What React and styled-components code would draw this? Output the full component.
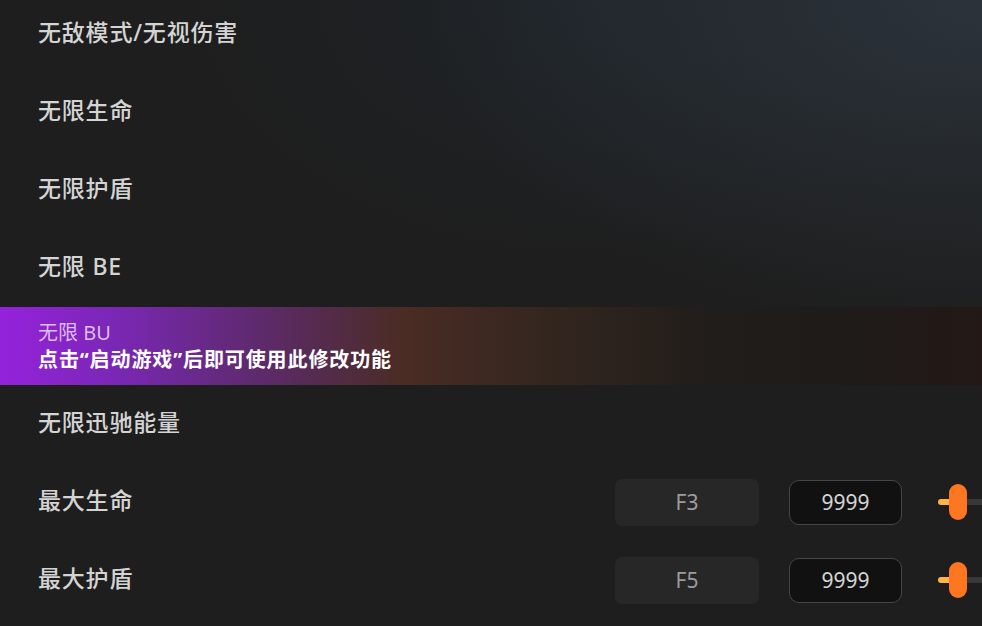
import React from "react";
import styled, { createGlobalStyle } from "styled-components";

const GlobalStyle = createGlobalStyle`
  html, body {
    margin: 0;
    padding: 0;
    background: #1e1e1e;
    overflow: hidden;
  }
  body {
    font-family: "Noto Sans", "Noto Sans CJK SC", sans-serif;
  }
`;

const Page = styled.div`
  width: 982px;
  height: 626px;
  overflow: hidden;
  background:
    radial-gradient(ellipse 560px 330px at 100% 0%, rgba(44, 52, 60, 0.95), rgba(44, 52, 60, 0) 100%),
    radial-gradient(ellipse 420px 260px at 62% 0%, rgba(30, 36, 42, 0.9), rgba(30, 36, 42, 0) 100%),
    #1e1e1e;
`;

const List = styled.div`
  display: flex;
  flex-direction: column;
  margin-top: -5px;
`;

const Row = styled.div`
  display: flex;
  align-items: center;
  height: 78px;
  padding-left: 38px;
  flex-shrink: 0;
  background: ${(p) =>
    p.$active
      ? "linear-gradient(90deg, #9522dc 0%, #7a27b4 12%, #5e2a6e 26%, #4a2c24 41%, #33261f 56%, #211d1a 72%, #1f1b19 86%, #231816 100%)"
      : "transparent"};
`;

const Label = styled.div`
  flex: 0 0 577px;
  font-size: 23px;
  font-weight: 500;
  color: #d4d4d4;
  letter-spacing: 0.8px;
  padding-bottom: 6px;
`;

const Stack = styled.div`
  display: flex;
  flex-direction: column;
`;

const SubLabel = styled.div`
  font-size: 20px;
  line-height: 27px;
  color: rgba(235, 220, 245, 0.85);
`;

const Hint = styled.div`
  font-size: 20px;
  line-height: 27px;
  font-weight: 700;
  color: #ffffff;
  letter-spacing: 0.9px;
`;

const Controls = styled.div`
  display: flex;
  align-items: center;
  flex-shrink: 0;
`;

const KeyBox = styled.div`
  width: 144px;
  height: 47px;
  border-radius: 7px;
  background: #272727;
  color: #9c9c9c;
  font-size: 21px;
  display: flex;
  align-items: center;
  justify-content: center;
`;

const ValueBox = styled.div`
  width: 111px;
  height: 43px;
  margin-left: 30px;
  border: 1px solid #464646;
  border-radius: 10px;
  background: #111111;
  color: #d4d4d4;
  font-size: 21px;
  display: flex;
  align-items: center;
  justify-content: center;
`;

const Slider = styled.div`
  margin-left: 36px;
  width: 240px;
  height: 36px;
  display: flex;
  align-items: center;
`;

const Filled = styled.div`
  width: 14px;
  height: 6px;
  border-radius: 3px 0 0 3px;
  background: #ffb248;
  flex-shrink: 0;
`;

const Thumb = styled.div`
  width: 18px;
  height: 36px;
  border-radius: 9px;
  background: #ff7620;
  margin-left: -3px;
  flex-shrink: 0;
`;

const Track = styled.div`
  flex: 1;
  height: 6px;
  background: #383838;
`;

const plain = ["无敌模式/无视伤害", "无限生命", "无限护盾", "无限 BE"];
const values = [
  { name: "最大生命", key: "F3", value: "9999" },
  { name: "最大护盾", key: "F5", value: "9999" },
];

export default function App() {
  return (
    <Page>
      <GlobalStyle />
      <List>
        {plain.map((t) => (
          <Row key={t}>
            <Label>{t}</Label>
          </Row>
        ))}
        <Row $active>
          <Stack>
            <SubLabel>无限 BU</SubLabel>
            <Hint>点击“启动游戏”后即可使用此修改功能</Hint>
          </Stack>
        </Row>
        <Row>
          <Label>无限迅驰能量</Label>
        </Row>
        {values.map((v) => (
          <Row key={v.name}>
            <Label>{v.name}</Label>
            <Controls>
              <KeyBox>{v.key}</KeyBox>
              <ValueBox>{v.value}</ValueBox>
              <Slider>
                <Filled />
                <Thumb />
                <Track />
              </Slider>
            </Controls>
          </Row>
        ))}
      </List>
    </Page>
  );
}
